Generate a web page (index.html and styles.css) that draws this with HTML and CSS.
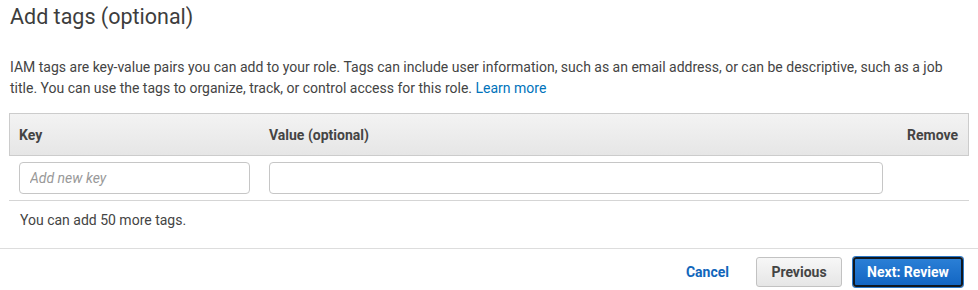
FILE: index.html
```html
<!DOCTYPE html>
<html>
<head>
    <title>Add tags - IAM</title>
    <link rel="stylesheet" href="styles.css">
</head>
<body>
    <div class="page">
        <h2 class="title">Add tags (optional)</h2>
        <p class="intro">IAM tags are key-value pairs you can add to your role. Tags can include user information, such as an email address, or can be descriptive, such as a job title. You can use the tags to organize, track, or control access for this role. <a href="#" class="link">Learn more</a></p>

        <div class="tags-table">
            <div class="tags-head">
                <div class="cell">Key</div>
                <div class="cell">Value (optional)</div>
                <div class="cell cell-right">Remove</div>
            </div>
            <div class="tags-row">
                <div class="cell"><input type="text" class="field" placeholder="Add new key" /></div>
                <div class="cell"><input type="text" class="field" /></div>
                <div class="cell"></div>
            </div>
        </div>

        <p class="tags-left">You can add 50 more tags.</p>
    </div>

    <div class="footer">
        <a href="#" class="cancel">Cancel</a>
        <button type="button" class="btn btn-secondary">Previous</button>
        <button type="button" class="btn btn-primary">Next: Review</button>
    </div>
</body>
</html>
```

FILE: styles.css
```css
* {
    margin: 0;
    padding: 0;
    box-sizing: border-box;
    font-family: Roboto, "Liberation Sans", Arial, sans-serif;
}

body {
    background: #fff;
    color: #444;
    width: 978px;
    height: 290px;
    overflow: hidden;
}

.page {
    padding: 0 10px 0 9px;
}

.title {
    margin-top: 5px;
    padding-left: 1px;
    font-size: 21.5px;
    line-height: 24px;
    font-weight: 400;
    color: #3d3d3d;
}

.intro {
    margin-top: 28px;
    padding-left: 1px;
    font-size: 14px;
    line-height: 21px;
}

.link {
    color: #0073bb;
    text-decoration: none;
}

.tags-table {
    margin-top: 14px;
    width: 960px;
}

.tags-head,
.tags-row {
    display: grid;
    grid-template-columns: 250px 1fr 75px;
    align-items: center;
}

.tags-head {
    height: 43px;
    background: linear-gradient(#f3f3f3, #e6e6e6);
    border: 1px solid #cccccc;
    font-size: 14px;
    font-weight: 700;
    color: #444;
}

.tags-row {
    height: 45px;
    padding: 0 1px;
    border-bottom: 1px solid #d5d5d5;
}

.cell {
    padding: 0 10px 0 9px;
}

.cell-right {
    text-align: right;
}

.field {
    width: 100%;
    height: 32px;
    padding: 0 10px;
    border: 1px solid #c6c6c6;
    border-radius: 4px;
    font-size: 14px;
    color: #444;
    outline: none;
}

.field::placeholder {
    color: #999;
    font-style: italic;
}

.tags-left {
    margin-top: 9px;
    padding-left: 11px;
    font-size: 14px;
    line-height: 21px;
}

.footer {
    margin-top: 17px;
    border-top: 1px solid #dddddd;
    padding: 8px 15px 0 0;
    display: flex;
    justify-content: flex-end;
    align-items: center;
}

.cancel {
    color: #1166bb;
    font-size: 14px;
    font-weight: 700;
    text-decoration: none;
    margin-right: 27px;
}

.btn {
    height: 30px;
    font-size: 14px;
    font-weight: 700;
    border-radius: 3px;
    cursor: pointer;
}

.btn-secondary {
    width: 86px;
    background: linear-gradient(#f7f7f7, #e6e6e6);
    border: 1px solid #c2c2c2;
    color: #444;
    margin-right: 11px;
}

.btn-primary {
    width: 110px;
    background: linear-gradient(#2a7fd6, #1366c3);
    border: 2px solid #101820;
    box-shadow: 0 0 0 1px #2b78c8;
    color: #fff;
}
```
